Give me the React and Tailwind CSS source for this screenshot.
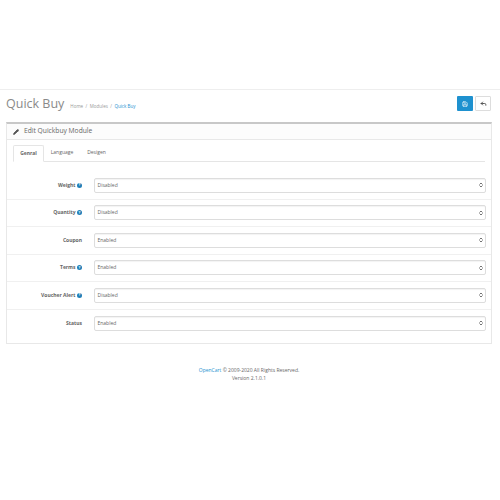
import { Pencil, Save, Reply, ChevronsUpDown } from "lucide-react";

const rows = [
  { label: "Weight", value: "Disabled", help: true },
  { label: "Quantity", value: "Disabled", help: true },
  { label: "Coupon", value: "Enabled", help: false },
  { label: "Terms", value: "Enabled", help: true },
  { label: "Voucher Alert", value: "Disabled", help: true },
  { label: "Status", value: "Enabled", help: false },
];

function Row({ label, value, help, last }) {
  return (
    <div className={"flex items-center h-[27.5px] " + (last ? "" : "border-b border-[#f0f0f0]")}>
      <div className="w-[75px] flex justify-end items-center gap-[1.5px] text-[5px] font-bold text-[#666]">
        <span>{label}</span>
        {help && (
          <span className="w-[5px] h-[5px] rounded-full bg-[#1f7fb8] shrink-0 flex items-center justify-center text-[4px] leading-none text-white">
            ?
          </span>
        )}
      </div>
      <div className="ml-[11.5px] w-[392px] h-[15px] bg-white border border-[#ddd] rounded-[2px] flex items-center justify-between pl-[3px] pr-[1px] text-[5px] text-[#666] shadow-[inset_0_1px_1px_rgba(0,0,0,0.05)]">
        {value}
        <ChevronsUpDown size={6} strokeWidth={3} className="text-[#444]" />
      </div>
    </div>
  );
}

export default function App() {
  return (
    <div className="w-[500px] h-[500px] bg-white overflow-hidden font-['Open_Sans',sans-serif]">
      <div className="h-[89px]"></div>
      <div className="border-t border-[#eee] h-[33px] flex items-start justify-between pl-[6px] pr-[9px] pt-[6px]">
        <div className="flex items-baseline">
          <h1 className="text-[12.5px] leading-[16px] text-[#8a8a8a]">Quick Buy</h1>
          <div className="ml-[6px] flex gap-[2.5px] text-[4.5px] text-[#999]">
            <span>Home</span>
            <span>/</span>
            <span>Modules</span>
            <span>/</span>
            <span className="text-[#1e91cf]">Quick Buy</span>
          </div>
        </div>
        <div className="flex gap-[2px]">
          <div className="w-[16px] h-[15px] bg-[#1e91cf] rounded-[1px] flex items-center justify-center">
            <Save size={6} strokeWidth={2.5} className="text-white" />
          </div>
          <div className="w-[16px] h-[15px] bg-white border border-[#ddd] rounded-[1px] flex items-center justify-center">
            <Reply size={7} strokeWidth={3} className="text-[#444]" />
          </div>
        </div>
      </div>
      <div className="mx-[6px] w-[486px] h-[222px] border border-[#e8e8e8] border-t-2 border-t-[#c8c8c8]">
        <div className="h-[16px] bg-[#fcfcfc] border-b border-[#e8e8e8] flex items-center pl-[6px] text-[6.7px] text-[#666]">
          <Pencil size={6} strokeWidth={3} fill="currentColor" className="mr-[5px] text-[#555]" />
          Edit Quickbuy Module
        </div>
        <div className="px-[6px] pt-[5px]">
          <div className="flex h-[17px] border-b border-[#e5e5e5] text-[5px] text-[#666]">
            <div className="w-[31px] h-[17px] bg-white border border-[#e5e5e5] border-b-white rounded-t-[2px] flex items-center justify-center font-bold">
              Genral
            </div>
            <div className="ml-[6px] w-[24px] flex items-center justify-center">Language</div>
            <div className="ml-[13px] w-[19px] flex items-center justify-center">Desigen</div>
          </div>
        </div>
        <div className="pt-[10px]">
          {rows.map((row, i) => (
            <Row key={row.label} {...row} last={i === rows.length - 1} />
          ))}
        </div>
      </div>
      <div className="mt-[22px] text-center text-[5px] leading-[8px] text-[#666] pr-[2px]">
        <p><span className="text-[#1e91cf]">OpenCart</span> © 2009-2020 All Rights Reserved.</p>
        <p>Version 2.1.0.1</p>
      </div>
    </div>
  );
}
